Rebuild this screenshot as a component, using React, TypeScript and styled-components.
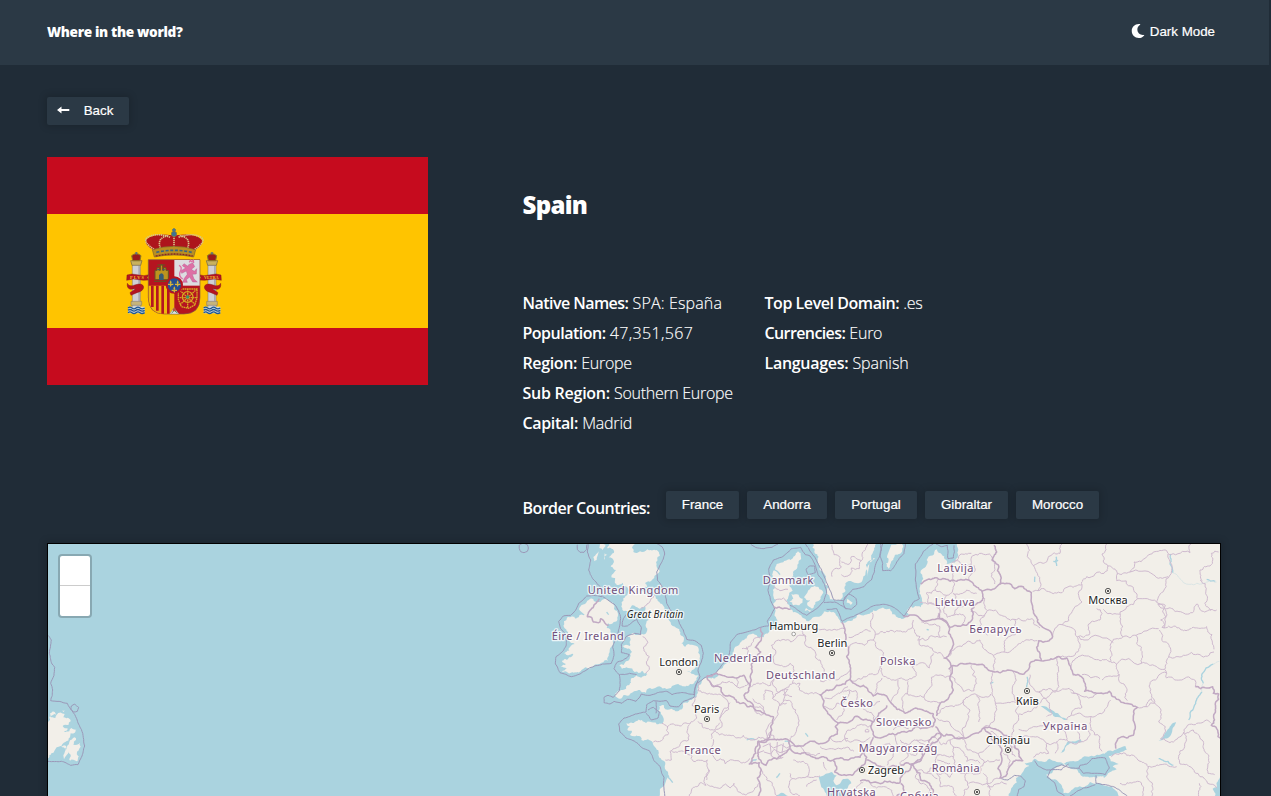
import React from 'react';
import styled, { createGlobalStyle } from 'styled-components';
import { FaMoon } from 'react-icons/fa';

const Global = createGlobalStyle`
  * { box-sizing: border-box; }
  html, body { margin: 0; background: #202c37; overflow: hidden; }
  body { color: #fff; font-family: "Open Sans", "Noto Sans", sans-serif; font-size: 16px; }
`;

const Page = styled.div`
  width: 1271px;
  height: 796px;
  overflow: hidden;
  background: #202c37;
`;

const Header = styled.header`
  display: flex;
  align-items: center;
  justify-content: space-between;
  width: 1269px;
  height: 65px;
  padding: 0 54px 3px 47px;
  background: #2b3945;
`;

const Brand = styled.h1`
  margin: 0;
  padding-top: 1px;
  font-size: 13.6px;
  font-weight: 800;
  line-height: 20px;
  letter-spacing: -0.33px;
`;

const ModeButton = styled.button`
  display: flex;
  align-items: center;
  gap: 5px;
  padding: 0;
  border: 0;
  background: none;
  color: #fff;
  font: 13.333px "Liberation Sans", Arial, sans-serif;
  -webkit-text-stroke: 0.2px #fff;
`;

const Main = styled.main`
  padding: 32px 50px 0 47px;
`;

const Button = styled.button<{ $w: number; $end?: number }>`
  display: flex;
  align-items: center;
  justify-content: center;
  width: ${(p) => p.$w}px;
  height: 28px;
  padding: 0 ${(p) => p.$end ?? 0}px 2px 0;
  border: 0;
  border-radius: 2px;
  background: #2b3945;
  box-shadow: 0 0 7px 2px rgba(0, 0, 0, 0.15);
  color: #fff;
  font: 13.333px "Liberation Sans", Arial, sans-serif;
  -webkit-text-stroke: 0.2px #fff;
`;

const BackIcon = styled.svg`
  width: 13px;
  height: 8px;
  margin-right: 14px;
`;

const Country = styled.section`
  display: flex;
  gap: 94.5px;
  height: 418px;
  padding-top: 32px;
`;

const Flag = styled.svg`
  flex: none;
  width: 381px;
  height: 228px;
`;

const Details = styled.div`
  flex: 1;
  padding-top: 30px;
`;

const Name = styled.h2`
  margin: 0;
  font-size: 24px;
  font-weight: 800;
  line-height: 36px;
  letter-spacing: -0.7px;
`;

const Facts = styled.div`
  display: grid;
  grid-template-columns: 242px 1fr;
  padding-top: 65px;
  height: 216px;
`;

const Fact = styled.p`
  margin: 0;
  height: 30px;
  line-height: 30px;
  white-space: nowrap;
`;

const FactLabel = styled.span<{ $s: number }>`
  font-weight: 600;
  letter-spacing: ${(p) => p.$s}px;
`;

const FactValue = styled.span<{ $s: number }>`
  font-weight: 300;
  letter-spacing: ${(p) => p.$s}px;
  -webkit-text-stroke: 0.15px #fff;
`;

const Borders = styled.div`
  display: flex;
  gap: 8px;
  padding-top: 52px;
`;

const BordersLabel = styled.span`
  width: 135.5px;
  padding-top: 5px;
  font-weight: 600;
  line-height: 24px;
  white-space: nowrap;
  letter-spacing: -0.55px;
`;

const MapFrame = styled.div`
  position: relative;
  width: 1174px;
  height: 300px;
  border: 1px solid #000;
  background: #aad3df;
  box-shadow: 0 0 7px 2px rgba(0, 0, 0, 0.15);
`;

const MapSvg = styled.svg`
  display: block;
  width: 1172px;
  height: 272px;
`;

const Zoom = styled.div`
  position: absolute;
  top: 10px;
  left: 10px;
  width: 34px;
  height: 64px;
  border: 2px solid rgba(0, 0, 0, 0.2);
  border-radius: 4px;
  background: #fff;
  background-clip: padding-box;
`;

const ZoomKey = styled.div`
  height: 30px;
  &:first-child { border-bottom: 1px solid #ccc; }
`;

type Pt = [number, number];

const parse = (s: string, dx: number): Pt[] =>
  s.trim().split(/\s+/).map((q) => {
    const [x, y] = q.split(',').map(Number);
    return [x + dx, y] as Pt;
  });

/* Midpoint displacement with a repeatable offset gives lines a surveyed, jagged look. */
const rough = (pts: Pt[], amount: number): Pt[] => {
  const noise = (a: Pt, b: Pt) => {
    const v = Math.sin(a[0] * 12.9898 + a[1] * 78.233 + b[0] * 37.719 + b[1] * 4.581) * 43758.5453;
    return (v - Math.floor(v)) * 2 - 1;
  };
  let out = pts;
  for (let pass = 0; pass < 3; pass++) {
    const next: Pt[] = [];
    out.forEach((p, i) => {
      next.push(p);
      const q = out[i + 1];
      if (!q) return;
      const dx = q[0] - p[0];
      const dy = q[1] - p[1];
      const span = Math.hypot(dx, dy);
      if (span < 7 || span > 300) return;
      const k = noise(p, q) * amount;
      next.push([(p[0] + q[0]) / 2 - dy * k, (p[1] + q[1]) / 2 + dx * k]);
    });
    out = next;
  }
  return out;
};

const toPath = (pts: Pt[]) => 'M' + pts.map((p) => `${p[0].toFixed(1)},${p[1].toFixed(1)}`).join('L');

/* Column origins: west Atlantic, west, centre, east, far east. */
const A = -1500;
const W = 0;
const C = 540;
const E = 1080;
const F = 1500;
type Shape = [number, string];

const land: Shape[] = [
  [W, `382,840 379,720 376,672 362,655 348,625 338,607 318,600 304,600 296,588 270,585 275,572 262,568 270,558 258,551 288,544 306,540 318,549 330,545 350,553 368,550 366,525 356,497 372,496 376,508 400,510 426,508 428,492 455,480 470,468 474,440 486,422 510,414 536,405 528,398 548,384 560,370 578,345 586,320 600,308 622,288 645,284 658,294 672,292 690,272 708,262 712,240
    704,222 700,195 708,180 700,160 704,140 698,110 702,82 722,68 752,60 774,34 782,40 776,70 766,90 756,112 748,135 758,152 745,170 742,192 752,208 770,218 786,232 806,244 842,228 868,214 888,226 902,248 940,236 975,224 1010,212 1050,206 1072,232 1090,236 1112,226 1100,214 1108,200 1142,202 1146,180 1140,140 1142,92 1160,60 1190,28 1206,44 1220,72 1244,68 1252,38 1250,0 2100,0 2100,840`],
  [W, `218,0 202,25 222,38 206,52 222,66 212,80 228,90 214,112 232,110 230,135 248,128 262,142 250,175 244,200 256,212 276,196 298,206 316,200 306,222 318,232 326,240 318,262 316,282 296,284 280,278 262,286 272,300 270,318 246,318 262,326 276,336 270,352 258,364 238,376 246,386 264,384 284,396 306,392 322,402 318,408 290,406 276,414 262,436 248,450 226,468 240,476 250,466 268,466 282,454 300,450 318,458 330,444 352,440 374,444 396,438 420,436 450,432 470,420 476,408 460,402 440,396 462,388 478,370 480,350 476,326 456,314 436,320 424,310 432,298 420,282 418,268 398,258 384,236 378,214 366,192 352,178 340,164 316,162 300,154 322,142 316,128 334,122 348,104 350,72 360,46 350,30 322,28 300,34 280,36 276,22 292,0`],
  [W, `120,212 124,196 142,182 160,178 176,186 196,176 212,186 222,206 234,222 230,244 214,252 204,250 200,264 214,282 218,300 214,320 206,342 204,362 184,368 160,378 136,382 112,396 84,398 66,396 80,386 62,380 78,372 66,362 92,352 100,342 72,340 88,332 92,318 104,312 88,300 84,276 72,262 72,244 82,232 108,236 118,226 134,224`],
  [W, `172,40 162,64 170,60 176,34`], [W, `180,12 196,14 188,30 178,24`], [W, `194,40 202,44 192,60`], [W, `226,110 234,114 224,130`],
  [C, `272,0 278,24 296,50 298,76 312,100 316,120 326,142 318,160 330,178 348,182 368,172 376,150 376,130 398,126 420,128 436,104 440,80 454,60 460,34 478,0`],
  [C, `514,14 536,6 548,14 536,42 514,64 506,86 498,70 502,46`], [C, `382,176 398,188 392,196 380,188`],
  [C, `214,162 236,164 248,176 238,196 220,196 208,184 220,176`],
  [C, `262,158 280,140 296,142 310,158 302,176 286,186 276,206 262,196 270,180 252,172`],
  [C, `258,204 276,208 270,216 254,212`], [C, `448,72 460,54 466,56 442,110`], [C, `192,72 214,68 230,84 220,102 194,98 176,90`],
  [A, `0,542 24,546 30,528 46,534 50,524 74,522 70,532 88,536 92,544 86,554 68,558 84,566 72,576 88,574 94,564 112,566 106,576 92,580 90,592 76,606 66,622 78,630 88,606 104,592 108,600 100,614 120,608 122,620 112,634 110,664 90,662 92,644 84,634 72,658 70,646 80,622 62,618 50,622 34,640 26,654 0,670`],
  [A, `30,520 44,516 48,524 32,528`], [A, `66,512 76,510 72,516`],
];

const water: Shape[] = [
  [E, `316,840 326,762 338,740 350,728 348,714 362,706 372,690 388,678 374,670 396,666 404,656 418,664 440,664 448,656 470,666 490,672 510,664 530,664 548,652 572,648 600,644 625,632 650,628 676,618 680,630 652,640 626,648 632,664 656,672 638,680 650,688 624,700 612,714 592,708 610,736 636,740 652,756 664,840`],
  [C, `296,710 316,702 334,696 350,706 340,722 350,736 366,720 384,716 394,730 380,748 392,840 330,840 318,760 304,742`],
  [C, `168,768 184,758 204,768 190,790 172,790`],
  [F, `540,712 530,728 530,742 518,746 526,760 520,790 550,790`],
  [F, `2,498 24,504 54,520 92,542 64,534 40,528 24,514`],
  [F, `356,602 372,586 388,564 408,546 400,562 384,594 368,600`],
  [F, `60,640 84,604 120,598 126,606 90,610 70,636`],
];

const landOnWater: Shape[] = [
  [F, `18,704 36,700 54,680 74,672 92,686 110,688 122,706 152,712 190,708 196,722 178,730 150,726 132,742 106,742 84,760 70,758 66,738 50,720 30,714`],
];

const lakes: Shape[] = [
  [C, `166,60 164,90 180,104`], [F, `392,42 390,72 398,98`], [F, `500,118 526,124`],
  [F, `520,372 498,384 486,402 490,430`], [F, `486,456 480,464 462,500 446,540`],
  [E, `382,410 380,442`], [F, `356,656 384,664 400,676`], [C, `194,604 210,606`], [W, `632,664 650,658`], [F, `48,50 50,78`], [F, `40,64 54,60`],
  [C, `80,600 106,600`], [C, `256,580 264,590`], [W, `382,696 398,728`], [W, `200,216 206,224`], [E, `404,110 404,126`], [E, `270,430 280,426`], [C, `170,714 180,700`], [C, `620,268 626,270`],
];

const rivers: Shape[] = [
  [F, `398,98 430,128 470,130 500,126 530,126`], [F, `490,430 486,456`], [F, `520,372 538,364`],
];

const sea: Shape[] = [
  [W, `144,12 142,36 152,60 146,90 158,116 176,136 188,150 186,170 160,166 140,168 116,190 106,212 92,226 70,228 56,244 62,266 82,290 78,318 70,332 48,350 46,372 60,398 94,410 120,402 148,384 188,372 214,370 222,346 218,322 230,290 238,262 242,236 236,212 222,192 204,180 188,170`],
  [W, `352,12 366,20 374,42 362,72 350,96 352,120 366,140 376,164 380,190 390,210 408,222 418,250 430,270 440,298 464,302 484,316 490,340 484,366 474,392 480,410 472,426 464,450 462,464 430,458 396,464 380,454 352,458 330,466 304,462 288,484 262,478 246,490 222,484 210,492 192,488 192,472 204,466 220,472 238,452 238,404 222,386 230,368 262,352 268,344 244,338 244,314 258,290 284,280 302,284 304,262 290,238 262,258 246,258 250,236 262,220`],
  [W, `376,790 372,712 360,680 342,662 328,632 304,622 290,608 258,594 240,576 236,552 252,534 286,522 318,516 320,494 340,482 380,482 390,498 416,500 430,484 462,472 470,430 500,410 526,402 550,370 568,342 572,306 590,284 634,272 662,262 686,258 682,244 694,224 704,204 694,186 684,152 690,116 686,88 700,60 724,52`],
  [C, `184,52 214,26 242,22 256,44 270,48 286,76 294,104 314,134 320,160 312,184 290,206 260,226 236,212 210,196`],
  [C, `256,12 272,36 294,70 310,104 322,132 342,180 370,182 398,148 432,140 454,120 468,70 484,30 482,12`],
  [C, `488,12 480,42 488,70 488,92 512,92 530,66 552,40 556,12`],
  [C, `374,172 386,162 408,176 410,194 394,208 376,206 370,188 374,172`],
  [C, `284,78 286,98 264,104 258,88 268,78 284,78`],
  [C, `320,208 350,206 360,228 366,244 400,230 430,214 466,196 500,194 530,208 552,228 582,184 598,176 586,120 586,72 610,34 640,12`],
  [C, `92,12 106,22 132,26 156,22 174,12`], [C, `312,188 344,186 380,206`],
  [E, `108,12 124,20 142,16 144,56 160,54 162,16`],
  [W, `112,14 112,28 120,37 132,37 140,28 140,14`],
  [W, `-62,16 -58,12 -48,10 -38,14 -35,24 -38,34 -48,38 -58,35 -62,26 -62,16`],
  [W, `318,520 334,540 354,534 358,516 340,502 324,510`], [W, `348,484 348,520`], [W, `238,404 268,400 290,404`],
  [A, `24,286 34,300 28,340 36,372 44,382 42,406 32,430 38,450 32,482 82,490 96,512 110,536 124,568 134,618 124,652 114,674 92,676 64,664 24,664`],
  [A, `94,498 104,492 116,502 112,514 100,516 93,508 94,498`],
  [E, `304,716 324,720 344,706 362,708 376,722 372,740 356,748 346,790`],
  [E, `404,662 412,676 440,690 484,690 490,682 506,672`],
  [F, `64,674 32,690 22,712 44,728 52,754 74,768`], [F, `64,674 96,684 116,684 130,700 196,704 208,684 196,654 156,656 140,672 120,676 116,686`],
  [F, `168,706 168,730 206,736 236,748 262,768`], [F, `90,768 130,744 166,734`],
];

const national: Shape[] = [
  [W, `178,176 168,190 148,214 142,230 156,234 160,246 176,248 182,236 194,248 206,256`],
  [W, `500,408 514,432 520,440 544,444 550,464 576,470 590,486 610,488 622,500 640,500 648,512 672,520 700,530 692,560 682,600 654,604 640,650 628,672 658,668 664,690 652,714 660,740 656,790`],
  [W, `500,408 530,400 566,412 590,414 612,406 624,428 630,440 612,466 620,480 636,490 640,502`],
  [W, `662,264 664,298 646,322 662,336 648,352 634,372 634,400 628,438`],
  [C, `160,202 188,206 212,208`],
  [C, `366,246 374,276 372,306 386,324 380,350 390,380 390,418 376,432 350,436 330,450 300,464 312,482 310,500 330,526 354,548 384,548 404,530 430,540 462,544 476,520 500,496`],
  [C, `390,418 402,430 420,440 430,436 444,452 460,468 472,460 500,468 514,490 530,508 556,520 582,506 612,512 640,522 646,540 638,560 602,566 586,560 556,576 528,584 488,592 462,588 454,566 462,544`],
  [C, `114,604 138,606 162,598 190,598 212,604 224,618 250,618 284,604 320,606 330,592 352,582 346,560 354,548`],
  [C, `206,604 210,626 194,640 170,656 148,660 138,676 124,668 114,640 114,604`],
  [C, `212,626 228,640 256,638 280,652 310,650 340,660 384,660 420,652 432,638 452,612 460,592`],
  [C, `340,662 350,680 344,696 360,704 396,706 410,692 436,668 440,652 432,640`],
  [C, `440,660 470,676 500,684 540,676 580,672 608,648 636,610 662,592 646,560`],
  [C, `420,722 450,728 510,724 540,728 548,704 570,690 574,674`],
  [C, `542,730 552,752 530,768`], [C, `574,674 600,700 602,720 622,726 640,750 636,768`],
  [C, `550,230 600,236 660,236 682,250 686,280 698,300 696,326 672,354 688,364 690,410 700,450 680,480 656,500 650,528`],
  [E, `62,132 84,118 112,114 134,116 170,124 206,120 222,136 246,154 262,148 300,132 302,108 294,74 276,60 290,36 282,16`],
  [E, `246,154 250,174 242,186 214,208 216,240 186,256 150,262 142,248 120,236 118,220`],
  [E, `300,132 320,130 344,146 370,140 394,158 398,204 410,232 424,258 458,290 442,304 416,302 410,322 424,362 446,360 472,350 500,354 512,380 520,404 546,412 554,454 580,458 600,460 628,454 650,478 690,492 712,502 700,534 706,560 700,586 666,590 648,608 648,626`],
  [E, `146,388 176,374 220,372 260,384 284,396 318,392 340,394 372,402 390,370 424,362`],
  [E, `112,580 150,584 192,594 226,580 256,562 280,566 300,574 334,590 340,610 356,632 368,662 340,664 326,684 308,712 300,714 306,660 304,624 280,604 258,574 250,562`],
  [E, `112,580 96,592 82,618 64,660 34,674`],
  [F, `466,440 482,446 518,440 520,460 536,462 526,490 524,520 514,556 530,566 534,590 544,596`],
];

const regional: Shape[] = [
  [W, `344,166 328,188 302,206`], [W, `308,290 324,308 310,324 328,350 320,372 328,388 318,400`],
  [W, `478,428 474,452 500,462 532,464 560,478 566,500 540,540 546,560 524,572 514,596`],
  [W, `470,470 456,496 470,512 470,534 450,552 420,558 382,560 366,550`], [W, `382,558 384,584 364,602 340,606`],
  [W, `448,554 446,600 424,606 400,626 390,634 394,660 376,660`], [W, `474,544 490,564 520,570 540,548`],
  [W, `526,574 556,586 584,590 610,586 632,600 680,598`], [W, `520,598 518,640 530,662 552,660 556,672 602,668 630,656`],
  [W, `394,632 430,634 454,644 460,664 502,660 508,690 498,736 484,728 460,742 450,790`],
  [W, `500,732 526,742 556,732 570,744 582,730 604,760 620,764 644,744 656,730`], [W, `506,690 500,720`],
  [W, `540,534 566,508 570,488`], [W, `510,432 560,428 588,438 612,440 624,430`], [W, `590,414 590,440`], [W, `634,440 668,428 692,436 702,416 712,456 744,448 730,464 756,470`],
  [W, `640,500 660,500 674,518`], [W, `606,326 634,316 640,300 660,294`], [W, `620,320 622,344 650,350`],
  [C, `160,350 166,330 154,316 170,302 212,306 230,292 258,290 246,272 254,260 292,266 350,270 372,266`],
  [C, `256,290 262,320 282,330 286,350 300,360 312,386 300,410 302,424 330,420 368,408 390,392`],
  [C, `160,348 164,372 190,380 210,370 222,392 218,430 240,430 238,450 256,460 288,458 300,464`],
  [C, `218,430 192,450 190,482 216,490 234,530 236,556 226,580 210,604`], [C, `170,602 148,578 140,600`], [C, `192,482 166,536 146,600`],
  [C, `190,452 166,462 158,476 180,496 200,490`], [C, `132,480 136,450 158,456 158,476`], [C, `98,476 130,500 134,520 108,518 98,494`],
  [C, `456,218 452,258 466,280 460,300 432,316 400,310 386,324`], [C, `452,274 410,284 386,292`], [C, `466,284 500,274 548,276 576,264 580,240`],
  [C, `578,262 600,290 598,314 644,336 672,352`], [C, `460,300 484,330 490,350 480,380 466,404 430,410 392,424`], [C, `484,384 500,412 532,418 564,420 586,410 576,380 608,368 628,384 634,360 640,340`],
  [C, `464,460 470,432 486,414`], [C, `534,420 538,444 520,470 514,490`], [C, `564,424 560,460 590,470 612,472 620,456 634,412 690,408`], [C, `564,460 546,480 552,516`], [C, `612,472 640,484 660,488`],
  [C, `314,474 340,470 366,456 384,440`], [C, `312,498 338,508 350,490 378,480 388,452`], [C, `370,456 408,452 402,486 430,500 462,496 480,484`], [C, `350,540 370,500`], [C, `430,508 456,520 462,540`],
  [C, `384,570 412,556 444,562 456,548`], [C, `384,570 374,586 378,604 404,600 430,606 450,592`], [C, `330,592 384,596`], [C, `300,620 330,626 370,624 402,634`],
  [C, `436,570 444,568 446,576 436,576 436,570`],
  [C, `524,586 520,640 502,676`], [C, `480,620 508,610 520,630`], [C, `520,570 540,560 566,566`], [C, `560,616 564,650 540,672`], [C, `590,600 620,620 640,604`],
  [C, `160,140 180,152 204,148`], [C, `166,180 190,174 204,190`],
  [C, `336,14 342,44 360,52 364,80 344,86 336,110`], [C, `364,66 390,70 394,50 424,62 418,86 394,84 384,108 364,104`], [C, `424,62 428,36 444,12`],
  [C, `210,620 236,616 250,630 300,640`], [C, `220,660 250,664 268,688 260,710 216,716 210,700`], [C, `260,710 300,708`], [C, `120,690 140,720 160,740 172,768`], [C, `216,716 210,750 240,768`], [C, `310,666 320,690`], [C, `260,740 290,720`],
  [C, `410,746 430,726`], [C, `450,726 460,740 500,742 520,768`],
  [C, `600,186 628,190 658,206 654,236`], [C, `604,246 644,252 660,260 662,292 620,300 592,300`], [C, `662,292 680,290`],
  [E, `112,118 106,150 78,160 84,190 118,196 120,230`], [E, `106,150 140,166 158,150 158,120`], [E, `140,166 134,200 142,232 160,226 178,200 210,196`], [E, `178,200 160,160 200,150 230,160`], [E, `186,256 196,232 160,226`], [E, `160,124 162,92 152,78 168,62 186,72 214,76 222,46 244,40 270,42`], [E, `222,76 220,98 206,120`], [E, `270,44 284,84 274,100 284,132`], [E, `166,62 180,44 214,40`],
  [E, `212,214 254,226 262,212 304,226 342,238 396,236 420,264`], [E, `254,174 262,212`], [E, `342,238 346,284 316,300 312,336 280,346 258,330 240,300 200,306 166,324 150,346`], [E, `254,226 240,264 262,286`], [E, `312,336 350,318 374,302 412,302`], [E, `280,346 282,390`],
  [E, `380,12 382,50 400,76 412,100 414,152 398,154`], [E, `400,78 430,70 450,48 480,40 486,12`], [E, `414,152 450,156 490,154 510,138 546,134`], [E, `546,134 546,186 514,220 486,254 458,288`], [E, `486,254 512,262 530,290 540,322 524,346 476,350`], [E, `532,290 568,284 566,252 600,240 606,220 590,206`],
  [E, `546,134 560,110 612,100 622,92 624,78 606,42 620,12`], [E, `624,78 650,92 650,122 700,142 712,176 770,186`], [E, `650,102 690,96 760,104 804,110`], [E, `690,96 702,66 740,50 760,36 800,32 812,44 870,38 872,12`], [E, `804,42 808,108 792,150 770,186`], [E, `712,176 680,200 660,216 668,258 670,290`], [E, `610,208 630,220 660,222`], [E, `770,186 790,206 818,206 856,222 878,218 892,192 914,216 950,210`],
  [F, `356,190 376,196 368,216 378,230 362,240 372,266`], [F, `352,192 370,200 374,240 366,264`],
  [E, `786,262 826,258 850,272 880,262 920,260 936,284 942,328`], [E, `778,270 790,306 812,328 806,352 794,388`], [E, `806,350 850,346 900,344 942,336`], [E, `794,388 800,414 840,420 880,418 886,440`], [E, `670,290 708,286 776,266`], [E, `708,286 710,310 726,340 724,370 752,376 794,388`], [E, `670,290 640,298 630,328 632,366 650,372 724,370`], [E, `536,290 552,300 640,308`], [E, `534,350 560,348 600,362 630,366`], [E, `650,372 654,400 672,432 676,460 682,482`], [E, `606,420 640,408 660,404`], [E, `800,400 760,420 752,460 764,488 738,500`], [E, `534,352 512,380`], [E, `546,404 600,416`], [E, `712,502 738,500 754,476 776,500 776,546 796,560 782,596 820,606 850,580`],
  [E, `850,580 880,554 920,540 932,548`], [E, `850,580 854,620 836,650 840,672 870,680 900,710 950,744`], [E, `850,576 880,570 906,600 912,632 926,656 924,700 944,704`], [E, `634,650 660,640 700,646 720,664 744,680 740,712 758,742 756,768`], [E, `744,680 780,674 830,680`], [E, `896,768 898,730`], [E, `660,730 690,728 712,724 730,740 728,768`], [E, `900,120 918,150 914,190 932,212`], [E, `906,122 900,90 930,78 934,40 956,36`],
  [E, `152,388 152,410 170,430 190,454 222,452 230,430 218,406 214,376`], [E, `282,392 272,430 276,458 286,486 284,520 280,546 250,562`], [E, `230,466 236,500 236,546`], [E, `340,396 344,430 352,486 356,540 340,558 334,586`], [E, `286,490 330,488 350,490`], [E, `110,526 150,498 190,480 230,464 272,462`], [E, `190,482 210,510 204,540 192,592`], [E, `110,534 150,550 192,592`], [E, `356,522 394,514 420,490 446,470 480,452 516,450 540,480 546,502 514,524 500,540`], [E, `390,404 396,440 416,456 450,446 470,452 472,400 474,350`], [E, `416,456 440,480 456,520 440,530`], [E, `356,568 400,560 440,552 470,556 490,570 500,600 470,606 440,610 422,596 400,590 356,604`], [E, `470,606 466,640`], [E, `440,610 446,640 400,652`], [E, `512,456 540,466 590,462`], [E, `514,526 546,524 570,530 600,520 622,500 632,480`], [E, `574,530 572,570 600,590 606,634`], [E, `500,600 540,606 560,600 566,572`], [E, `532,576 536,606`],
  [E, `96,592 124,614 150,600 192,598`], [E, `84,620 116,644 160,650 160,620 150,600`], [E, `192,598 202,630 236,640 260,624 280,610`], [E, `116,644 110,680 80,700 48,690`], [E, `160,650 170,690 200,700 240,700 252,668 236,640`], [E, `110,700 150,712 170,690`], [E, `110,700 120,740 160,744 170,768`], [E, `252,668 300,660`], [E, `250,700 262,730 302,714`], [E, `200,700 206,740 190,768`], [E, `206,730 262,730 270,768`], [E, `262,740 320,732`], [E, `48,690 60,730 90,750 90,768`], [E, `80,700 112,716`], [E, `20,640 50,644 70,620`], [E, `0,600 30,612 60,600 96,592`], [E, `160,620 192,640 200,664 240,670`], [E, `112,660 150,670`],
  [E, `272,574 312,592 320,620`], [E, `310,640 330,660 324,680`], [E, `290,600 320,608 352,630`], [E, `330,610 346,650`],
];

const swiss = `M 668,620 l18,-8 l14,12 l24,-10 l16,10 l12,-6 M 672,636 l20,6 l10,-14 l18,10 l26,-8 M 690,608 l4,40 l16,10 l20,-6 M 712,606 l-2,30 l14,20 M 730,610 l-4,30 M 650,640 l22,-8`;

const places: [string, number, number, number, 'c' | 't' | 'i'][] = [
  ['United Kingdom', 279, 162, 272, 'c'], ['Éire / Ireland', 143, 299, 216, 'c'], ['Great Britain', 345, 235, 170, 'i'],
  ['London', 416, 377, 116, 't'], ['Paris', 500, 518, 76, 't'], ['France', 487, 643, 110, 'c'],
  ['Nederland', 609, 366, 174, 'c'], ['Danmark', 744, 133, 152, 'c'], ['Hamburg', 761, 269, 147, 't'],
  ['Berlin', 877, 321, 90, 't'], ['Deutschland', 782, 416, 208, 'c'], ['Polska', 1073, 374, 106, 'c'],
  ['Česko', 950, 502, 98, 'c'], ['Slovensko', 1091, 559, 166, 'c'], ['Magyarország', 1074, 636, 236, 'c'],
  ['Zagreb', 1038, 703, 108, 't'], ['Hrvatska', 934, 769, 146, 'c'], ['Србија', 1138, 779, 116, 'c'],
  ['România', 1247, 695, 144, 'c'], ['Latvija', 1246, 96, 108, 'c'], ['Lietuva', 1244, 197, 120, 'c'],
  ['Беларусь', 1366, 280, 157, 'c'], ['Москва', 1704, 192, 118, 't'], ['Київ', 1462, 495, 68, 't'],
  ['Україна', 1575, 571, 134, 'c'], ['Chișinău', 1404, 613, 132, 't'],
];

const towns: Pt[] = [[417, 396], [501, 537], [876, 339], [966, 690], [1461, 453], [1704, 153], [1404, 630], [1311, 756]];

const outline = (list: Shape[], amount: number) => list.map(([o, s]) => toPath(rough(parse(s, o), amount)));

const EuropeMap = () => (
  <MapSvg viewBox="-1476 12 3516 816" strokeLinejoin="round">
    <g fill="#f2efe9">{outline(land, 0.25).map((d, i) => <path key={i} d={d + 'Z'} />)}</g>
    <g fill="#aad3df">{outline(water, 0.15).map((d, i) => <path key={i} d={d + 'Z'} />)}</g>
    <g fill="#f2efe9">{outline(landOnWater, 0.15).map((d, i) => <path key={i} d={d + 'Z'} />)}</g>
    <g fill="none" stroke="#aad3df" strokeWidth="4">{outline(lakes, 0.15).map((d, i) => <path key={i} d={d} />)}</g>
    <g fill="none" stroke="#cfe0e2" strokeWidth="2">{outline(rivers, 0.15).map((d, i) => <path key={i} d={d} />)}</g>
    <g fill="none" stroke="#9b98b8" strokeWidth="3">{outline(sea, 0.06).map((d, i) => <path key={i} d={d} />)}</g>
    <g fill="none" stroke="#cfbacf" strokeWidth="3">
      {outline(regional, 0.22).map((d, i) => <path key={i} d={d} />)}
      <path d={swiss} />
    </g>
    <g fill="none" stroke="#c1a9c3" strokeWidth="4.6">{outline(national, 0.18).map((d, i) => <path key={i} d={d} />)}</g>
    {towns.map(([x, y]) => (
      <g key={x}>
        <circle cx={x} cy={y} r="8" fill="#f2efe9" stroke="#444" strokeWidth="2.6" />
        <circle cx={x} cy={y} r="3.2" fill="#333" />
      </g>
    ))}
    <circle cx="761" cy="282" r="5.5" fill="#fff" stroke="#777" strokeWidth="2" />
    <g fontFamily='"Noto Sans", sans-serif' textAnchor="middle" paintOrder="stroke" stroke="#fff" strokeOpacity=".75" strokeWidth="8">
      {places.map(([t, x, y, w, k]) => (
        <text
          key={t}
          x={x}
          y={y}
          textLength={w}
          fontSize={k === 'i' ? 30 : 33}
          fontStyle={k === 'i' ? 'italic' : 'normal'}
          fill={k === 'c' ? '#714f7b' : '#262626'}
        >
          {t}
        </text>
      ))}
    </g>
  </MapSvg>
);

const Pillar = ({ x }: { x: number }) => (
  <g transform={`translate(${x} 0)`}>
    <path d="M-12,131h24v134h-24z" fill="#d0d0d4" stroke="#77716c" strokeWidth="1.5" />
    <path d="M6,137h5v107h-5z" fill="#aaa9ae" />
    <path d="M-17,122h34l-4,14h-26z" fill="#c9b15e" stroke="#6f6245" strokeWidth="2" />
    <path d="M-14,107q14,-12 28,0l-3,15h-22z" fill="#9c1c1c" stroke="#8a7a28" strokeWidth="3" />
    <path d="M0,96v8M-4,99h8" stroke="#527088" strokeWidth="3" />
    <path d="M-16,244h32v12h-32z" fill="#c7b47a" stroke="#77716c" strokeWidth="1.5" />
    <path d="M-25,260h50v20h-50z" fill="#cfd6d8" />
    <path d="M-25,264q6,-5 12,0t12,0t12,0t14,0M-25,271q6,-5 12,0t12,0t12,0t14,0M-25,278q6,-5 12,0t12,0t12,0t14,0" fill="none" stroke="#1c5794" strokeWidth="4" />
  </g>
);

const Arms = () => (
  <g transform="translate(68 63) scale(.33333)">
    <Pillar x={64} />
    <Pillar x={291} />
    <g fill="#b51420" stroke="#771316" strokeWidth="1.2">
      <path d="M36,165l15,-3l36,5l15,-3l-6,9l7,7l-18,1l-30,-4l-20,4z" />
      <path d="M37,190q5,12 22,5q24,-8 27,6q0,12 -20,17l-18,8l-3,-8l17,-12l-16,2q-11,-3 -9,-18z" />
      <path d="M318,165l-15,-3l-36,5l-15,-3l6,9l-7,7l18,1l30,-4l20,4z" />
      <path d="M317,190q-5,12 -22,5q-24,-8 -27,6q0,12 20,17l18,8l3,-8l-17,-12l16,2q11,-3 9,-18z" />
    </g>
    <g fontFamily='"Liberation Serif", serif' fontSize="13" fontWeight="700" fill="#f0c22c">
      <text x="45" y="176" textLength="42">PLVS</text>
      <text x="267" y="176" textLength="44">VLTRA</text>
    </g>
    <path d="M100,119h155v113q0,50 -48,50h-59q-48,0 -48,-50z" fill="#b51420" stroke="#7e5a42" strokeWidth="2" />
    <path d="M178,120h76v77h-76z" fill="#dddde0" />
    <path d="M101,197h77v84h-30q-47,0 -47,-50z" fill="#efb80d" />
    <path d="M112,197v64M127,197v75M143,197v84M160,197v84" stroke="#b51420" strokeWidth="8" />
    <path d="M120,179v-28h6v-8h7v8h3v-17h7v17h3v-8h7v8h7v28zM117,184h43M127,135h24" fill="#bc941e" stroke="#665224" strokeWidth="3" />
    <path d="M127,149h6M143,149h6M134,178v-12q6,-8 10,0v12z" stroke="#375c75" strokeWidth="4" fill="#375c75" />
    <path d="M221,134l12,-6l6,12l-10,8l9,6l7,-8l-1,16l-12,1l5,14l10,9h-14l-9,-15l-10,8l3,8h-14l5,-12l9,-12l-3,-10l-14,7l-2,-8l14,-8l-10,-7l5,-6l12,8z" fill="#dd70a5" stroke="#b0578a" strokeWidth="1.2" />
    <path d="M203,177q-14,-10 -7,-23t-4,-18M223,127l3,-6l4,4l5,-4l1,8" stroke="#dd70a5" strokeWidth="4" fill="none" />
    <path d="M187,206h63v21q0,25 -20,39h-44z" fill="#b51420" />
    <g fill="none" stroke="#d7a523" strokeWidth="4">
      <path d="M190,207h56v28l-7,20l-18,10l-22,-5l-9,-22zM190,207l52,48M246,207l-52,48M218,206v58M188,233h58" strokeDasharray="5 1.5" />
      <circle cx="218" cy="231" r="16" />
    </g>
    <circle cx="218" cy="231" r="5" fill="#3f9467" />
    <path d="M164,282l13,-19l15,19z" fill="#dddde0" stroke="#777" />
    <path d="M170,279l8,-8l9,8" fill="none" stroke="#4a8b50" strokeWidth="3" />
    <circle cx="178" cy="269" r="5" fill="#b7553b" />
    <circle cx="178" cy="195" r="23" fill="#254f91" stroke="#b51420" strokeWidth="6" />
    {[[167, 190], [188, 190], [178, 208]].map(([x, y]) => (
      <path key={x} d={`M${x},${y - 9}l3,6l-2,4h7v4h-5l-3,6l-3,-6h-5v-4h7l-2,-4z`} fill="#dcb637" />
    ))}
    <path d="M117,91q-34,-20 -21,-34q24,-20 76,-11h11q52,-9 75,11q13,14 -20,34z" fill="#ad151c" />
    <g fill="none" stroke="#d9c58a" strokeWidth="5" strokeDasharray="4 2">
      <path d="M117,88q-36,-24 -20,-35q26,-17 70,-1M239,88q36,-24 20,-35q-26,-17 -70,-1M136,84q-12,-31 26,-38M218,84q12,-31 -26,-38M177,47v36" />
    </g>
    <path d="M112,89q64,-20 130,0l-6,22q-59,-12 -118,0z" fill="#b98f22" stroke="#7f632b" strokeWidth="2" />
    <path d="M124,97q53,-12 106,0" stroke="#386482" strokeWidth="5" strokeDasharray="9 5" fill="none" />
    <path d="M122,108q54,-12 111,0" stroke="#852126" strokeWidth="4" fill="none" strokeDasharray="6 3" />
    <circle cx="177" cy="42" r="8" fill="#3f7293" stroke="#877931" strokeWidth="2" />
    <path d="M177,24v14M171,30h12" stroke="#47718a" strokeWidth="4" />
  </g>
);

/* Label, value, label tracking, value tracking. */
const facts: [string, string, number, number][][] = [
  [
    ['Native Names:', 'SPA: España', -0.55, 0.15],
    ['Population:', '47,351,567', -0.5, 0.35],
    ['Region:', 'Europe', -0.35, -0.3],
    ['Sub Region:', 'Southern Europe', -0.25, -0.3],
    ['Capital:', 'Madrid', -0.35, -0.2],
  ],
  [
    ['Top Level Domain:', '.es', -0.45, -0.3],
    ['Currencies:', 'Euro', -0.6, -0.25],
    ['Languages:', 'Spanish', -0.3, -0.05],
  ],
];

const neighbours: [string, number][] = [['France', 73], ['Andorra', 80], ['Portugal', 82], ['Gibraltar', 83], ['Morocco', 83]];

export default function App() {
  return (
    <Page>
      <Global />
      <Header>
        <Brand>Where in the world?</Brand>
        <ModeButton><FaMoon size={14} />Dark Mode</ModeButton>
      </Header>
      <Main>
        <Button $w={82} $end={6}>
          <BackIcon viewBox="0 0 13 8"><path d="M0,4L4.5,0.6V3H12.3V5H4.5V7.4Z" fill="#fff" /></BackIcon>
          Back
        </Button>
        <Country>
          <Flag viewBox="0 0 381 228">
            <rect width="381" height="228" fill="#c60b1e" />
            <rect y="57" width="381" height="114" fill="#ffc400" />
            <Arms />
          </Flag>
          <Details>
            <Name>Spain</Name>
            <Facts>
              {facts.map((col, i) => (
                <div key={i}>
                  {col.map(([k, v, ls, vs]) => (
                    <Fact key={k}>
                      <FactLabel $s={ls}>{k}</FactLabel> <FactValue $s={vs}>{v}</FactValue>
                    </Fact>
                  ))}
                </div>
              ))}
            </Facts>
            <Borders>
              <BordersLabel>Border Countries:</BordersLabel>
              {neighbours.map(([n, w]) => <Button key={n} $w={w}>{n}</Button>)}
            </Borders>
          </Details>
        </Country>
        <MapFrame>
          <EuropeMap />
          <Zoom><ZoomKey /><ZoomKey /></Zoom>
        </MapFrame>
      </Main>
    </Page>
  );
}
